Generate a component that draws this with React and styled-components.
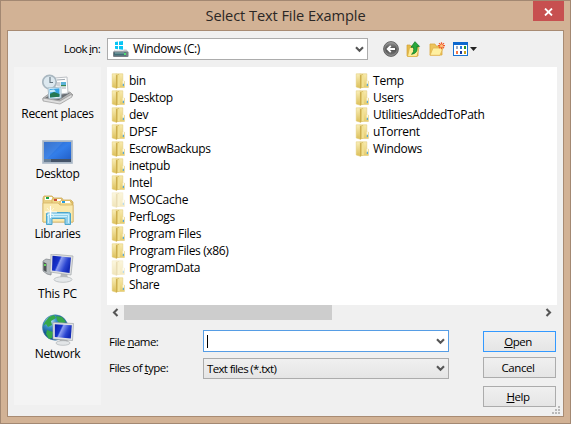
import React from "react";
import styled, { createGlobalStyle } from "styled-components";

const GlobalStyle = createGlobalStyle`
  * { box-sizing: border-box; }
  body { margin: 0; overflow: hidden; color: #000; font-family: "Open Sans", "Noto Sans", sans-serif; font-size: 12px; }
  svg { display: block; flex: none; }
  button { font: inherit; color: inherit; }
`;

const Window = styled.div`
  width: 571px;
  height: 424px;
  padding: 0 6px 6px;
  border: 1px solid #a38872;
  background: #d2b295;
  display: flex;
  flex-direction: column;
`;
const TitleBar = styled.header`
  height: 29px;
  flex: none;
  display: grid;
  grid-template-columns: 31px 1fr 31px;
  align-items: start;
`;
const Title = styled.h1`
  grid-column: 2;
  margin: 0;
  font-size: 14.6px;
  font-weight: 400;
  line-height: 28px;
  letter-spacing: -0.08px;
  text-align: center;
  white-space: nowrap;
  color: #2b2725;
`;
const CloseButton = styled.button`
  width: 31px;
  height: 20px;
  padding: 2px 0 0;
  border: 0;
  background: #c75050;
  display: grid;
  place-items: center;
`;
const Client = styled.main`
  flex: 1;
  border: 1px solid #a88b73;
  background: #f0f0f0;
  padding: 7px 6px 0;
  display: grid;
  grid-template-columns: 87px 450px;
  grid-template-rows: 29px 338px;
  column-gap: 6px;
`;
const LookInLabel = styled.label`
  height: 22px;
  line-height: 21px;
  padding-right: 1px;
  text-align: right;
  font-size: 11.5px;
  letter-spacing: -0.7px;
`;
const Toolbar = styled.div`
  display: flex;
  align-items: flex-start;
`;
const Combo = styled.div`
  width: ${(p) => p.$width}px;
  height: ${(p) => p.$height}px;
  border: 1px solid ${(p) => (p.$active ? "#569de5" : "#acacac")};
  background: ${(p) => (p.$filled ? "linear-gradient(#f0f0f0, #e5e5e5)" : "#fff")};
  padding: 0 3px 0 ${(p) => p.$inset || 3}px;
  display: flex;
  align-items: center;
`;
const ComboText = styled.span`
  flex: 1;
  line-height: 18px;
  padding-left: ${(p) => p.$gap || 0}px;
  font-size: ${(p) => p.$size || 11.5}px;
  letter-spacing: ${(p) => p.$spacing || -0.6}px;
`;
const Caret = styled.span`
  width: 1px;
  height: 13px;
  margin-right: auto;
  background: #000;
`;
const Tools = styled.div`
  display: flex;
  padding: 3px 0 0 15px;
`;
const ToolButton = styled.button`
  width: ${(p) => p.$width || 23}px;
  height: 16px;
  padding: 0;
  border: 0;
  background: none;
`;
const Places = styled.nav`
  background: #f4f4f4;
  padding-top: 7px;
  display: flex;
  flex-direction: column;
`;
const Place = styled.a`
  height: 60px;
  display: flex;
  flex-direction: column;
  align-items: center;
  line-height: 16px;
  white-space: nowrap;
  letter-spacing: ${(p) => p.$spacing || -0.15}px;
`;
const Body = styled.section`
  display: flex;
  flex-direction: column;
`;
const FileList = styled.ul`
  height: 238px;
  flex: none;
  margin: 0;
  padding: 5px 0 0 4px;
  list-style: none;
  background: #fff;
  display: grid;
  grid-auto-flow: column;
  grid-template-rows: repeat(13, 17px);
  grid-template-columns: 244px 1fr;
`;
const FileRow = styled.li`
  display: flex;
  align-items: center;
  line-height: 17px;
  white-space: nowrap;
  svg { opacity: ${(p) => (p.$hidden ? 0.42 : 1)}; }
`;
const FileName = styled.span`
  padding-left: 2px;
  letter-spacing: ${(p) => p.$spacing}px;
`;
const ScrollBar = styled.div`
  height: 15px;
  flex: none;
  display: grid;
  grid-template-columns: 17px 208px 1fr 17px;
  align-items: center;
  justify-items: center;
`;
const Thumb = styled.div`
  width: 100%;
  height: 15px;
  background: #cdcdcd;
`;
const Footer = styled.div`
  flex: none;
  height: 96px;
  padding-top: 10px;
  display: grid;
  grid-template-columns: 96px 246px 1fr;
`;
const Labels = styled.div`
  padding-left: 2px;
  display: flex;
  flex-direction: column;
  gap: 5px;
`;
const FieldLabel = styled.label`
  height: 21px;
  line-height: 23px;
  font-size: 11.5px;
  letter-spacing: ${(p) => p.$spacing}px;
`;
const Fields = styled.div`
  display: flex;
  flex-direction: column;
  gap: 6px;
`;
const Actions = styled.div`
  padding: 1px 0 0 34px;
  display: flex;
  flex-direction: column;
`;
const ActionButton = styled.button`
  width: 73px;
  height: 21px;
  flex: none;
  margin-bottom: ${(p) => p.$after || 0}px;
  padding: 0 3px 0 0;
  border: 1px solid ${(p) => (p.$primary ? "#3399ff" : "#acacac")};
  background: linear-gradient(#f0f0f0, #e5e5e5);
  line-height: 19px;
  font-size: 11.5px;
  letter-spacing: -0.45px;
`;
const Key = styled.span`
  text-decoration: underline;
  text-decoration-thickness: 1px;
  text-underline-offset: 1px;
  text-decoration-skip-ink: none;
`;
const Grip = styled.div`
  align-self: flex-end;
  margin: -1px -4px 0 0;
`;

const Chevron = () => (
  <svg width="9" height="7" viewBox="0 0 9 7"><path d="M1 1.3 4.5 4.8 8 1.3" fill="none" stroke="#555" strokeWidth="2.1" /></svg>
);
const Arrow = ({ right }) => (
  <svg width="7" height="9" viewBox="0 0 7 9"><path d={right ? "M1.5 1 5 4.5 1.5 8" : "M5.5 1 2 4.5 5.5 8"} fill="none" stroke="#555" strokeWidth="2.1" /></svg>
);
const Folder = () => (
  <svg width="16" height="16" viewBox="0 0 16 16">
    <defs>
      <linearGradient id="folderFace" x1="0" x2="0" y2="1"><stop stopColor="#f8eaae" /><stop offset="1" stopColor="#e6cc6b" /></linearGradient>
      <linearGradient id="folderSide" x2="0" y2="1"><stop stopColor="#f9eeb8" /><stop offset="1" stopColor="#dcbf58" /></linearGradient>
    </defs>
    <path d="M5 .8h6.8v7.4h1.6v6.3H5z" fill="url(#folderFace)" stroke="#e2cb7c" strokeWidth=".6" />
    <path d="M1.2.8h4v14.4L1.2 14z" fill="url(#folderSide)" stroke="#e0c870" strokeWidth=".5" />
    <path d="M5 2.2 8 1v13.3l-3 1.5z" fill="#cdae4d" />
    <path d="M6.5 2 8.8 1.2v12.6L6.5 15z" fill="#f2e193" />
    <path d="M11.7 7.8h1.2v3.4h-1.2z" fill="#fffdf0" /><path d="M11.8 10.8H13V13h-1.2z" fill="#58a8d9" />
  </svg>
);
const Drive = () => (
  <svg width="18" height="18" viewBox="0 0 18 18">
    <path d="M3 2 6 1.6V5H3zM7 1.5 11 1V5H7zM3 6h3v3.2L3 8.8zM7 6h4v3.8l-4-.5z" fill="#08c5f5" />
    <path d="m3 9.5-2 2.8h15.5l-2-2.8h-3v1H3z" fill="#c4c6ca" />
    <rect x="1" y="11.5" width="15.5" height="5.5" rx="1" fill="#777f86" />
    <path d="M2 12.5h12v3H2z" fill="#416d76" /><path d="M3 12.5h9v1H3z" fill="#8cb1b3" /><path d="M12 13h2v2h-2z" fill="#51df72" />
  </svg>
);
const Back = () => (
  <svg width="17" height="16" viewBox="0 0 17 16">
    <defs><linearGradient id="backFill" x2="0" y2="1"><stop stopColor="#999" /><stop offset=".5" stopColor="#505050" /><stop offset="1" stopColor="#7a7a7a" /></linearGradient></defs>
    <circle cx="8" cy="8" r="7.4" fill="url(#backFill)" stroke="#606060" strokeWidth=".9" /><circle cx="8" cy="8" r="6.3" fill="none" stroke="#a5a5a5" strokeWidth=".6" />
    <path d="M12 8H4.8M7.8 4.8 4.6 8l3.2 3.2" fill="none" stroke="#fff" strokeWidth="1.8" />
  </svg>
);
const UpFolder = () => (
  <svg width="16" height="17" viewBox="0 0 16 17">
    <path d="M1 4h3l1 1h7v10H1z" fill="#e5bb49" stroke="#d2a13a" strokeWidth=".7" />
    <path d="m1.5 15.5 2-9h9.5l-2 9z" fill="#ffec95" stroke="#d9af45" strokeWidth=".8" />
    <path d="M5.5 13.2c2.2-1.4 2.5-3.4 2-7H5L9 .7 13.5 5.4H11c.6 4.3-.6 7.1-5.5 7.8z" fill="#28a83b" stroke="#137c27" strokeWidth=".8" />
  </svg>
);
const NewFolder = () => (
  <svg width="17" height="17" viewBox="0 0 17 17">
    <path d="M1 3h5l1 2h6v9H1z" fill="#edc45a" stroke="#dba940" strokeWidth=".8" />
    <path d="m1 14.3 3-7.3h10l-3 7.3z" fill="#fff0a0" stroke="#e1b351" strokeWidth=".8" />
    <path d="M12.5 1.2v7M9 4.7h7M10 2.2l5 5M15 2.2l-5 5" stroke="#f05a2b" strokeWidth="1.2" /><circle cx="12.5" cy="4.7" r="1.5" fill="#ffc37c" />
  </svg>
);
const ViewMenu = () => (
  <svg width="26" height="16" viewBox="0 0 26 16">
    <rect x=".5" y="1.5" width="14" height="13" fill="#fff" stroke="#1872d2" /><path d="M0 1h15v3H0z" fill="#0c67ce" />
    <path d="M3 5h2v3H3z" fill="#99a9c2" /><path d="M7 5h2v3H7z" fill="#2878dd" /><path d="M11 5h2v3h-2z" fill="#24932a" />
    <path d="M3 10h2v3H3z" fill="#f37547" /><path d="M7 10h2v3H7z" fill="#183a9d" /><path d="M11 10h2v3h-2z" fill="#c5a01f" />
    <path d="M17 6h7l-3.5 4z" fill="#222" />
  </svg>
);
const ScreenDefs = () => (
  <defs><linearGradient id="screenBlue" y2=".4"><stop stopColor="#0a1ca6" /><stop offset=".4" stopColor="#1733cd" /><stop offset=".48" stopColor="#8c9df1" /><stop offset=".8" stopColor="#2a44d0" /><stop offset="1" stopColor="#142bb7" /></linearGradient></defs>
);
const Recent = () => (
  <svg width="32" height="32" viewBox="0 0 32 32">
    <path d="m1 24 7-5 20-1 3 3-12 8L1 26z" fill="#b5b5b5" stroke="#888" strokeWidth=".6" />
    <path d="m3 24 7-4 18-1-11 7z" fill="#6b6f74" />
    <path d="m13 4 12-1 1 16-13 2z" fill="#fdfdfd" stroke="#bcc0c5" /><path d="m15 6 8-.6M14.5 9h4M14.5 11h4M20 14h4" stroke="#a1a9b1" /><path d="M19 8h5v4h-5z" fill="#5bb2d8" /><path d="M19 11h5v1.3h-5z" fill="#378451" />
    <circle cx="7.5" cy="8" r="6.7" fill="#dce8ef" stroke="#a9b7c0" strokeWidth="1.7" /><path d="M8 3v5.5h3" fill="none" stroke="#63737e" strokeWidth="1.1" />
    <path d="m6 14 13-1v11l-12 1z" fill="#eef9ff" stroke="#a6bdca" /><path d="m7.5 15 10-.7v8.4l-9.5.8z" fill="#39a4e3" /><path d="m8 20 4-2 5.5 2v2.8l-9.5.7z" fill="#257852" /><path d="m8 16 4-.5 2 2-6 1z" fill="#c8ecfc" />
    <path d="m1 24 17 3 12-7v3l-12 7-17-3z" fill="#dedede" stroke="#8c8c8c" strokeWidth=".6" />
  </svg>
);
const DesktopIcon = () => (
  <svg width="32" height="32" viewBox="0 0 32 32">
    <defs><linearGradient id="deskBlue" x1="0" y1="0" x2="1" y2="1"><stop stopColor="#2b60ba" /><stop offset=".5" stopColor="#337eea" /><stop offset="1" stopColor="#205bc3" /></linearGradient></defs>
    <path d="M.5 6.5h30v23H.5z" fill="#a9b6c5" stroke="#b8c4d0" /><path d="M2 8h27v20H2z" fill="url(#deskBlue)" /><path d="M2 8h19L5 25H2z" fill="#5d9bf0" opacity=".3" /><path d="M2 25h27v3H2z" fill="#445368" /><path d="M2 25h7v3H2z" fill="#6a7f94" />
  </svg>
);
const Libraries = () => (
  <svg width="32" height="32" viewBox="0 0 32 32">
    <path d="M1 8V4l1-2h8l2 2h8l1 2h8l2 2v20H1z" fill="#e9cf85" stroke="#cda955" strokeWidth=".8" />
    <path d="M3 3h7v3H3z" fill="#fff" /><path d="M4 3h3v2H4z" fill="#18a447" />
    <path d="M10 7V5h9l2 3h9v6H10z" fill="#efd98d" stroke="#d2a952" strokeWidth=".7" /><path d="M12 5h7v2h-7z" fill="#fff" /><path d="M12 5h3v2h-3z" fill="#cd4937" />
    <path d="M18 10V7h10l2 2v7H17z" fill="#f2dc91" stroke="#d2aa51" strokeWidth=".7" /><path d="M19 7h9v2h-9z" fill="#fff" /><path d="M20 7h3v2h-3z" fill="#279ddd" />
    <path d="M1 9h15l2 2h13v17H1z" fill="#fae9ae" stroke="#d6b565" strokeWidth=".8" />
    <path d="M4.5 30.5V20q0-1.5 2-1.5h20q2 0 2 1.5v10.5H23v-6H10v6z" fill="#91cfea" stroke="#4ca5cb" /><path d="M6.5 29v-8.5h20V29M8 22.5h17" fill="none" stroke="#cdf0fc" />
    <path d="M8.5 12v12M3 18h12" stroke="#fff" strokeWidth="1.1" /><path d="m5 14 7 8M12 14l-7 8" stroke="#fff" strokeWidth=".6" />
  </svg>
);
const Computer = () => (
  <svg width="32" height="32" viewBox="0 0 32 32">
    <ScreenDefs />
    <path d="m1 7 3-2 6 1-1 15-4-1-4-3z" fill="#b8bdc0" stroke="#7e8386" strokeWidth=".7" /><path d="m1.5 8 3 1.5v8.5l-3-1.7z" fill="#4d5254" /><path d="M2 10h2v2H2z" fill="#62d45c" />
    <path d="M19 19h6l1 6h-8z" fill="#b5b8bb" /><ellipse cx="21" cy="25.5" rx="9" ry="2.8" fill="#e5e8ea" stroke="#b0b4b7" strokeWidth=".7" />
    <path d="m9 0 22 2-2 19-21-3z" fill="#dedfe1" stroke="#a2a7ab" strokeWidth=".7" /><path d="m10.5 1.8 18.5 1.7-1.5 15.5-17.5-2.5z" fill="url(#screenBlue)" />
  </svg>
);
const Network = () => (
  <svg width="32" height="32" viewBox="0 0 32 32">
    <defs><radialGradient id="globe" cx=".3" cy=".25"><stop stopColor="#c7e9f8" /><stop offset=".5" stopColor="#3b8fca" /><stop offset="1" stopColor="#135690" /></radialGradient></defs>
    <circle cx="13.2" cy="13.5" r="12.7" fill="url(#globe)" stroke="#4a82ab" strokeWidth=".6" />
    <path d="M3 8 7 3l5-2 2 3-5 3 1 4-4 2-2-3-3 2zM14 2l6 1 4 5-6 2-3-4zM5 16l6 2-1 6-3 1-3-5z" fill="#36a84a" />
    <path d="M19 24h6l1 4h-9z" fill="#aaa" /><ellipse cx="21" cy="29" rx="7" ry="2.3" fill="#e2e5e7" stroke="#b0b4b7" strokeWidth=".7" />
    <path d="m11 8.5 20.5 1-1 17L11 25z" fill="#e2e3e5" stroke="#a2a7ac" strokeWidth=".7" /><path d="m12.8 10.3 17 1-1 13.2-16-1.5z" fill="url(#screenBlue)" />
  </svg>
);
const GripDots = () => (
  <svg width="9" height="9" viewBox="0 0 9 9"><path d="M6 0h2v2H6zM3 3h2v2H3zM6 3h2v2H6zM0 6h2v2H0zM3 6h2v2H3zM6 6h2v2H6z" fill="#b9b9b9" /></svg>
);

const places = [
  ["Recent places", Recent, -0.33],
  ["Desktop", DesktopIcon, -0.33],
  ["Libraries", Libraries, -0.3],
  ["This PC", Computer, -0.25],
  ["Network", Network, -0.3],
];
const folders = [
  ["bin", -0.3], ["Desktop", -0.35], ["dev", -0.3], ["DPSF", -0.2], ["EscrowBackups", -0.38],
  ["inetpub", -0.35], ["Intel", -0.3], ["MSOCache", -0.18], ["PerfLogs", -0.35],
  ["Program Files", -0.33], ["Program Files (x86)", -0.38], ["ProgramData", -0.35], ["Share", -0.35],
  ["Temp", -0.2], ["Users", -0.2], ["UtilitiesAddedToPath", -0.3], ["uTorrent", -0.35], ["Windows", -0.3],
];

export default function App() {
  return (
    <>
      <GlobalStyle />
      <Window>
        <TitleBar>
          <Title>Select Text File Example</Title>
          <CloseButton aria-label="Close">
            <svg width="9" height="8" viewBox="0 0 9 8"><path d="m1 .5 7 7M8 .5l-7 7" stroke="#fff" strokeWidth="1.8" /></svg>
          </CloseButton>
        </TitleBar>
        <Client>
          <LookInLabel>Look <Key>i</Key>n:</LookInLabel>
          <Toolbar>
            <Combo $width={261} $height={22} $inset={4}>
              <Drive /><ComboText $gap={3} $size={12} $spacing={-0.42}>Windows (C:)</ComboText><Chevron />
            </Combo>
            <Tools>
              <ToolButton aria-label="Back"><Back /></ToolButton>
              <ToolButton aria-label="Up one level"><UpFolder /></ToolButton>
              <ToolButton aria-label="New folder" $width={24}><NewFolder /></ToolButton>
              <ToolButton aria-label="View menu" $width={26}><ViewMenu /></ToolButton>
            </Tools>
          </Toolbar>
          <Places>
            {places.map(([name, Icon, spacing]) => <Place key={name} $spacing={spacing}><Icon />{name}</Place>)}
          </Places>
          <Body>
            <FileList>
              {folders.map(([name, spacing]) => (
                <FileRow key={name} $hidden={name === "MSOCache" || name === "ProgramData"}>
                  <Folder /><FileName $spacing={spacing}>{name}</FileName>
                </FileRow>
              ))}
            </FileList>
            <ScrollBar><Arrow /><Thumb /><span /><Arrow right /></ScrollBar>
            <Footer>
              <Labels>
                <FieldLabel $spacing={-0.55}>File <Key>n</Key>ame:</FieldLabel>
                <FieldLabel $spacing={-0.55}>Files of <Key>t</Key>ype:</FieldLabel>
              </Labels>
              <Fields>
                <Combo $width={246} $height={22} $active><Caret /><Chevron /></Combo>
                <Combo $width={246} $height={21} $filled><ComboText $spacing={-0.65}>Text files (*.txt)</ComboText><Chevron /></Combo>
              </Fields>
              <Actions>
                <ActionButton $primary $after={5}><Key>O</Key>pen</ActionButton>
                <ActionButton $after={8}>Cancel</ActionButton>
                <ActionButton><Key>H</Key>elp</ActionButton>
                <Grip><GripDots /></Grip>
              </Actions>
            </Footer>
          </Body>
        </Client>
      </Window>
    </>
  );
}
